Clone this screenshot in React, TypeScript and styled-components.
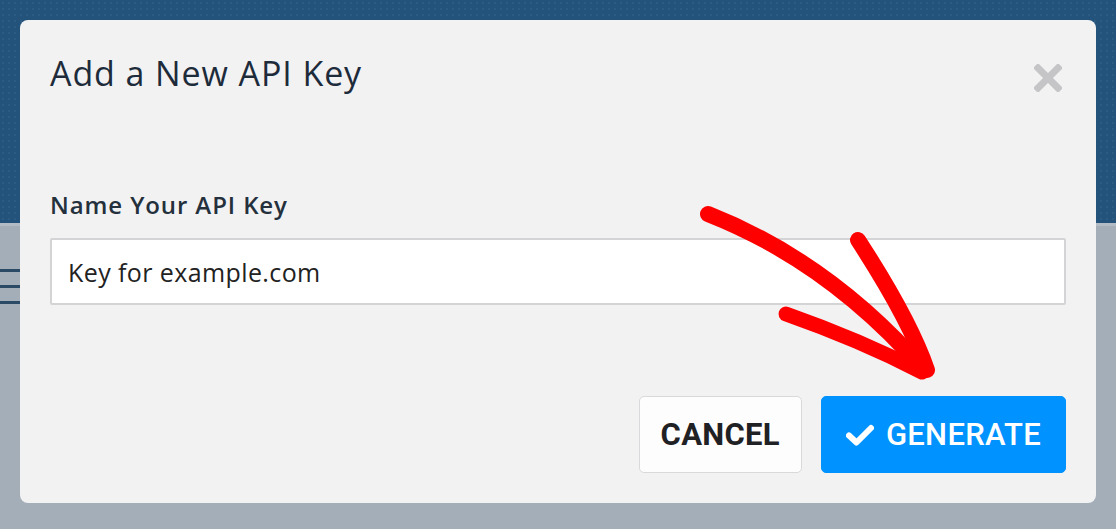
import React from "react";
import styled, { createGlobalStyle } from "styled-components";

const GlobalStyle = createGlobalStyle`
  html, body { margin: 0; padding: 0; }
  body { width: 1116px; height: 529px; overflow: hidden; font-family: "Open Sans", "Liberation Sans", sans-serif; }
  * { box-sizing: border-box; }
`;

const Page = styled.div`
  position: relative;
  width: 1116px;
  height: 529px;
  display: flex;
  flex-direction: column;
  background: #a4aeb8;
`;

const TopBar = styled.div`
  height: 226px;
  flex: none;
  background-color: #23527a;
  background-image: radial-gradient(rgba(255, 255, 255, 0.05) 1px, transparent 1px);
  background-size: 6px 6px;
  border-bottom: 3px solid #b3bbc4;
`;

const GreyArea = styled.div`
  flex: 1;
  padding-top: 43px;
`;

const Hamburger = styled.div`
  display: flex;
  flex-direction: column;
  gap: 13px;
  width: 22px;
`;

const HamburgerLine = styled.span`
  display: block;
  height: 3px;
  background: #2b4a66;
`;

const Overlay = styled.div`
  position: absolute;
  inset: 0;
  padding: 20px;
`;

const Modal = styled.div`
  background: #f2f2f3;
  border-radius: 8px;
  height: 483px;
  padding: 31px 30px 30px 30px;
  display: flex;
  flex-direction: column;
`;

const Header = styled.div`
  display: flex;
  align-items: flex-start;
  justify-content: space-between;
`;

const Title = styled.h2`
  margin: 0;
  font-family: "Open Sans", "Liberation Sans", sans-serif;
  font-weight: 400;
  font-size: 34px;
  letter-spacing: 0.9px;
  line-height: 44px;
  color: #1d2b3a;
`;

const CloseButton = styled.button`
  border: none;
  background: none;
  padding: 0;
  margin: 13px 4px 0 0;
  width: 28px;
  height: 28px;
  display: flex;
  cursor: pointer;
`;

const Label = styled.label`
  margin-top: 94px;
  font-family: "Open Sans", "Liberation Sans", sans-serif;
  font-weight: 600;
  font-size: 24px;
  letter-spacing: 0.9px;
  line-height: 32px;
  color: #24303c;
`;

const Input = styled.input`
  margin-top: 17px;
  height: 67px;
  width: 100%;
  border: 2px solid #d4d4d6;
  border-radius: 2px;
  background: #ffffff;
  padding: 0 16px;
  font-family: "Open Sans", "Liberation Sans", sans-serif;
  font-size: 25px;
  letter-spacing: 0.4px;
  color: #222;
  outline: none;
`;

const Footer = styled.div`
  margin-top: auto;
  display: flex;
  justify-content: flex-end;
  gap: 19px;
`;

const Button = styled.button<{ $primary?: boolean }>`
  height: 77px;
  padding: ${(p) => (p.$primary ? "0 24px 0 24px" : "0 21px")};
  border-radius: 5px;
  display: flex;
  align-items: center;
  gap: 12px;
  font-family: Roboto, "Liberation Sans", sans-serif;
  font-size: 31px;
  font-weight: ${(p) => (p.$primary ? 500 : 700)};
  letter-spacing: 0.3px;
  cursor: pointer;
  border: 1px solid ${(p) => (p.$primary ? "#0093ff" : "#d9d9db")};
  background: ${(p) => (p.$primary ? "#0093ff" : "#fdfdfd")};
  color: ${(p) => (p.$primary ? "#ffffff" : "#1f2124")};
`;

const ArrowLayer = styled.svg`
  position: absolute;
  inset: 0;
  pointer-events: none;
`;

export default function App() {
  return (
    <>
      <GlobalStyle />
      <Page>
        <TopBar />
        <GreyArea>
          <Hamburger>
            <HamburgerLine />
            <HamburgerLine />
            <HamburgerLine />
          </Hamburger>
        </GreyArea>
        <Overlay>
          <Modal>
            <Header>
              <Title>Add a New API Key</Title>
              <CloseButton aria-label="Close">
                <svg width="28" height="28" viewBox="0 0 28 28">
                  <path d="M4 4 L24 24 M24 4 L4 24" stroke="#c5c5c7" strokeWidth="7" strokeLinecap="square" />
                </svg>
              </CloseButton>
            </Header>
            <Label>Name Your API Key</Label>
            <Input defaultValue="Key for example.com" />
            <Footer>
              <Button>CANCEL</Button>
              <Button $primary>
                <svg width="28" height="22" viewBox="0 0 28 22">
                  <path d="M3 11.5 L10.5 18.5 L25 4" fill="none" stroke="#fff" strokeWidth="6" strokeLinecap="round" strokeLinejoin="round" />
                </svg>
                GENERATE
              </Button>
            </Footer>
          </Modal>
        </Overlay>
        <ArrowLayer width="1116" height="529" viewBox="0 0 1116 529">
          <g fill="none" stroke="#ff0000" strokeLinecap="round" strokeLinejoin="round">
            <path d="M708 214 Q 830 262 924 370" strokeWidth="16" />
            <path d="M858 240 Q 910 320 927 370" strokeWidth="16" />
            <path d="M786 314 Q 860 340 922 372" strokeWidth="15" />
          </g>
        </ArrowLayer>
      </Page>
    </>
  );
}
